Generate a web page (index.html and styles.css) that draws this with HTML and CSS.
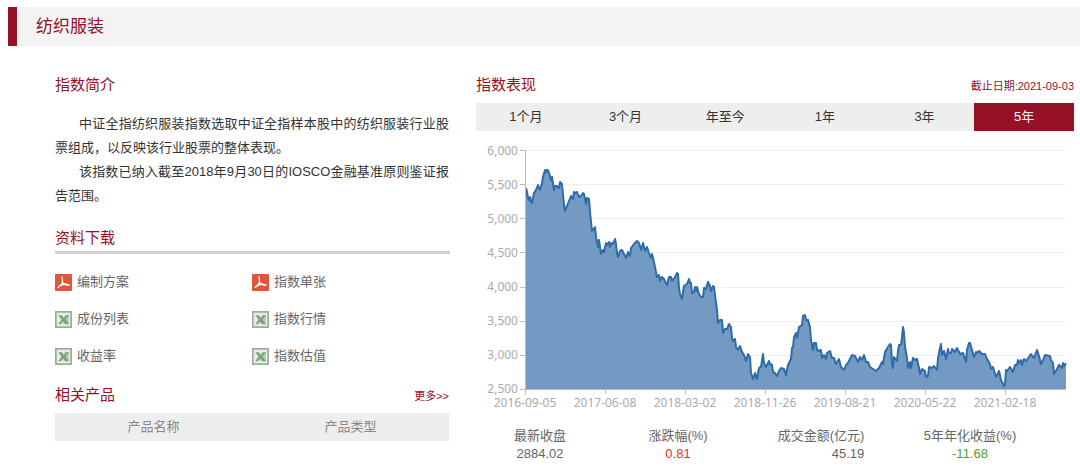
FILE: index.html
```html
<!DOCTYPE html>
<html lang="zh-CN">

<head>
    <meta charset="UTF-8">
    <meta name="viewport" content="width=device-width, initial-scale=1.0">
    <title>纺织服装</title>
    <link rel="stylesheet" href="styles.css">
</head>

<body>
    <svg class="icon-defs" aria-hidden="true">
        <symbol id="icon-pdf" viewBox="0 0 16 16">
            <rect width="16" height="16" rx="1" fill="#e0553c"/>
            <path d="M6.6 2.8c.5 2.400.700 3.600.4 5.200C6.500 9.800 4.800 11.300 3 12.600M7 8.200c1.500 1.600 3.500 2.200 6.500 2.200M5 11c1.800-1.200 4-1.600 6-1.500" fill="none" stroke="#fff" stroke-width="1.2" stroke-linecap="round"/>
        </symbol>
        <symbol id="icon-xls" viewBox="0 0 16 16">
            <rect width="16" height="16" fill="#9dab9d"/>
            <rect x="1.6" y="1.600" width="12.800" height="12.800" fill="#e6efe4"/>
            <path d="M9 4h4v8.500H8z" fill="#b4ceae"/>
            <path d="M3 4h3.500l1.900 2.500L10.400 4h2.900L9.800 8l3.500 4.500H9.800L7.700 10l-2.200 2.500H3L6.200 8.300z" fill="#7ba777"/>
        </symbol>
    </svg>

    <header class="page-title">
        <h1>纺织服装</h1>
    </header>

    <main class="content">
        <div class="left">
            <section>
                <h2>指数简介</h2>
                <div class="intro">
                    <p>中证全指纺织服装指数选取中证全指样本股中的纺织服装行业股票组成，以反映该行业股票的整体表现。</p>
                    <p>该指数已纳入截至2018年9月30日的IOSCO金融基准原则鉴证报告范围。</p>
                </div>
            </section>

            <section class="download">
                <h2>资料下载</h2>
                <ul class="files">
                    <li><a href="#"><svg class="icon"><use href="#icon-pdf"/></svg>编制方案</a></li>
                    <li><a href="#"><svg class="icon"><use href="#icon-pdf"/></svg>指数单张</a></li>
                    <li><a href="#"><svg class="icon"><use href="#icon-xls"/></svg>成份列表</a></li>
                    <li><a href="#"><svg class="icon"><use href="#icon-xls"/></svg>指数行情</a></li>
                    <li><a href="#"><svg class="icon"><use href="#icon-xls"/></svg>收益率</a></li>
                    <li><a href="#"><svg class="icon"><use href="#icon-xls"/></svg>指数估值</a></li>
                </ul>
            </section>

            <section class="related">
                <div class="section-head">
                    <h2>相关产品</h2>
                    <a class="more" href="#">更多&gt;&gt;</a>
                </div>
                <table class="products">
                    <thead>
                        <tr>
                            <th>产品名称</th>
                            <th>产品类型</th>
                        </tr>
                    </thead>
                </table>
            </section>
        </div>

        <section class="right">
            <div class="section-head">
                <h2>指数表现</h2>
                <span class="date">截止日期:2021-09-03</span>
            </div>
            <div class="tabs">
                <button type="button">1个月</button>
                <button type="button">3个月</button>
                <button type="button">年至今</button>
                <button type="button">1年</button>
                <button type="button">3年</button>
                <button type="button" class="active">5年</button>
            </div>

            <svg class="chart" viewBox="0 0 598 285" role="img" aria-label="指数表现">
                <g transform="translate(49 19)">
                    <path class="grid" d="M0 0H541M0 34H541M0 68H541M0 102H541M0 137H541M0 171H541M0 205H541"/>
                    <path class="area" id="area"/>
                    <path class="line" id="line"/>
                    <path class="axis" d="M0 0V239H541M-5 0H0M-5 34H0M-5 68H0M-5 102H0M-5 137H0M-5 171H0M-5 205H0M-5 239H0M0 239V244M80 239V244M160 239V244M240 239V244M320 239V244M400 239V244M480 239V244"/>
                    <g class="labels labels-y">
                        <text x="-7" y="5">6,000</text>
                        <text x="-7" y="39">5,500</text>
                        <text x="-7" y="73">5,000</text>
                        <text x="-7" y="107">4,500</text>
                        <text x="-7" y="141">4,000</text>
                        <text x="-7" y="175">3,500</text>
                        <text x="-7" y="209">3,000</text>
                        <text x="-7" y="243">2,500</text>
                    </g>
                    <g class="labels labels-x">
                        <text x="0" y="257">2016-09-05</text>
                        <text x="80" y="257">2017-06-08</text>
                        <text x="160" y="257">2018-03-02</text>
                        <text x="240" y="257">2018-11-26</text>
                        <text x="320" y="257">2019-08-21</text>
                        <text x="400" y="257">2020-05-22</text>
                        <text x="480" y="257">2021-02-18</text>
                    </g>
                </g>
            </svg>

            <dl class="stats">
                <div>
                    <dt>最新收盘</dt>
                    <dd>2884.02</dd>
                </div>
                <div>
                    <dt>涨跌幅(%)</dt>
                    <dd class="up">0.81</dd>
                </div>
                <div>
                    <dt>成交金额(亿元)</dt>
                    <dd class="amount">45.19</dd>
                </div>
                <div>
                    <dt>5年年化收益(%)</dt>
                    <dd class="down">-11.68</dd>
                </div>
            </dl>
        </section>
    </main>

    <script>
        // x,y pairs inside the 541 x 239 plot area
        const points = `1,38 2,42 3,48 4,50 5,47 6,52 7,53 8,48 9,43 11,40 13,35 15,40 17,33 18,27 20,20 21,22 22,20 23,20
            25,26 26,30 27,27 29,40 30,36 32,36 33,38 34,38 35,32 37,34 38,45 39,55 40,61 42,56 44,51 46,46 48,49 49,42 50,43
            52,42 54,47 56,46 58,43 59,44 61,54 62,48 64,49 65,62 67,81 70,77 71,87 73,97 74,90 76,104 78,100 79,102 81,93
            82,95 84,92 85,97 86,93 88,94 90,89 91,94 92,103 93,107 95,101 97,100 99,104 101,108 103,102 105,106 106,98
            109,94 112,91 114,93 116,100 118,93 120,101 122,97 124,103 126,108 127,104 128,108 130,117 131,122 132,127
            134,125 135,131 137,127 139,129 142,135 144,127 146,127 147,131 150,127 152,123 153,124 154,138 155,144
            157,149 158,142 159,136 162,134 164,129 165,133 166,133 167,143 169,142 170,137 171,141 172,137 174,144
            176,147 178,147 179,138 181,139 183,132 185,136 186,141 188,136 189,137 190,145 192,160 193,173 195,170
            197,170 198,183 200,179 202,179 204,174 206,177 207,188 208,191 210,189 211,197 213,200 215,196 217,202
            219,205 221,211 223,204 225,207 226,223 228,229 230,223 232,229 234,218 236,217 238,204 239,213 241,217
            244,211 245,214 247,215 248,222 250,223 252,226 254,221 256,218 259,219 261,225 263,215 266,209 267,198
            268,197 269,187 271,183 272,188 274,177 277,175 278,166 280,165 281,170 283,170 285,177 286,190 288,200
            289,193 291,193 292,200 294,201 296,200 297,208 299,205 301,209 302,203 305,201 307,208 309,208 311,214
            314,209 316,217 319,220 321,215 323,213 325,209 327,205 330,206 333,212 335,207 337,210 339,205 341,212
            343,212 345,217 348,219 351,221 354,218 357,212 358,214 360,202 363,197 365,194 366,195 367,213 368,218
            369,207 372,211 373,201 374,195 376,195 377,187 378,177 379,183 380,197 382,208 383,218 385,212 386,218
            388,208 390,210 392,209 394,218 395,224 397,219 400,221 401,227 403,226 404,217 407,218 409,216 412,220
            413,208 415,198 416,194 417,205 419,201 421,209 423,199 424,203 426,203 427,199 430,202 432,198 435,204
            438,203 441,212 442,200 444,193 445,193 447,200 449,207 451,202 452,203 454,201 457,204 460,204 462,209
            465,214 466,219 468,217 471,227 474,221 476,230 479,236 480,234 481,220 482,221 485,217 488,222 490,215
            492,215 493,210 494,213 496,210 497,215 499,209 501,211 506,204 509,208 512,200 514,206 516,214 518,210
            520,205 525,206 526,210 528,213 529,224 532,219 534,215 537,218 538,213 539,216 541,213`.trim().split(/\s+/);

        const line = 'M' + points.join('L');
        document.getElementById('line').setAttribute('d', line);
        document.getElementById('area').setAttribute('d', line + 'V239H1Z');

        const tabs = document.querySelectorAll('.tabs button');
        tabs.forEach(tab => tab.addEventListener('click', () => {
            tabs.forEach(t => t.classList.remove('active'));
            tab.classList.add('active');
        }));
    </script>
</body>

</html>
```
FILE: styles.css
```css
* {
    box-sizing: border-box;
}

body,
h1,
h2,
p,
ul,
dl,
dd {
    margin: 0;
    padding: 0;
}

body {
    font-family: "Liberation Sans", "Noto Sans CJK SC", sans-serif;
    font-size: 13px;
    color: #666;
    background-color: #fff;
}

a {
    color: inherit;
    text-decoration: none;
}

.icon-defs {
    display: none;
}

.page-title {
    margin: 7px 0 0 8px;
    padding-left: 19px;
    border-left: 9px solid #951126;
    background-color: #f3f3f3;
}

h1 {
    font-size: 17px;
    line-height: 39px;
    font-weight: normal;
    color: #951126;
}

h2 {
    font-size: 15px;
    line-height: 24px;
    font-weight: normal;
    color: #951126;
}

.content {
    display: grid;
    grid-template-columns: minmax(0, 395fr) minmax(0, 598fr);
    column-gap: 26px;
    padding: 27px 6px 0 55px;
}

.section-head {
    display: flex;
    justify-content: space-between;
    align-items: center;
}

.intro {
    padding: 15px 1px 0 0;
    line-height: 24px;
    color: #333;
    text-align: justify;
}

.intro p {
    text-indent: 24px;
}

.download {
    margin-top: 18px;
}

.download h2 {
    padding-bottom: 1px;
    border-bottom: 3px solid #d0d0d0;
}

.files {
    display: grid;
    grid-template-columns: 1fr 1fr;
    row-gap: 17px;
    padding: 18px 1px 17px 0;
    list-style: none;
    line-height: 20px;
}

.files a {
    display: flex;
    align-items: center;
    gap: 5px;
}

.icon {
    width: 17px;
    height: 17px;
}

.more,
.date {
    font-size: 11px;
    color: #951126;
}

.related {
    padding-right: 1px;
}

.products {
    width: 100%;
    margin-top: 6px;
    border-collapse: collapse;
    table-layout: fixed;
    background-color: #eee;
}

.products th {
    padding: 0;
    line-height: 28px;
    font-weight: normal;
    color: #888;
}

.tabs {
    display: grid;
    grid-template-columns: repeat(6, 1fr);
    margin-top: 6px;
    background-color: #eee;
}

.tabs button {
    padding: 0;
    border: none;
    background: none;
    font: inherit;
    line-height: 28px;
    color: #333;
    cursor: pointer;
}

.tabs .active {
    background-color: #951126;
    color: #fff;
}

.chart {
    display: block;
    width: 100%;
    height: auto;
}

.grid,
.axis {
    fill: none;
    stroke: #f0f0f0;
    shape-rendering: crispEdges;
}

.axis {
    stroke: #bbb;
}

.area {
    fill: #2b66a2;
    fill-opacity: 0.66;
}

.line {
    fill: none;
    stroke: #2f6ba8;
    stroke-width: 2;
    stroke-linejoin: round;
}

.labels {
    font-family: "Noto Sans", sans-serif;
    font-size: 12px;
    fill: #aaa;
}

.labels-y {
    text-anchor: end;
}

.labels-x {
    text-anchor: middle;
}

.stats {
    display: grid;
    grid-template-columns: 128fr 148fr 138fr 160fr;
    justify-items: center;
    padding: 11px 24px 0 0;
    line-height: 18px;
    text-align: center;
}

.stats .amount {
    text-align: right;
}

.stats .up {
    color: #e8341f;
}

.stats .down {
    color: #4fa32b;
}
```
